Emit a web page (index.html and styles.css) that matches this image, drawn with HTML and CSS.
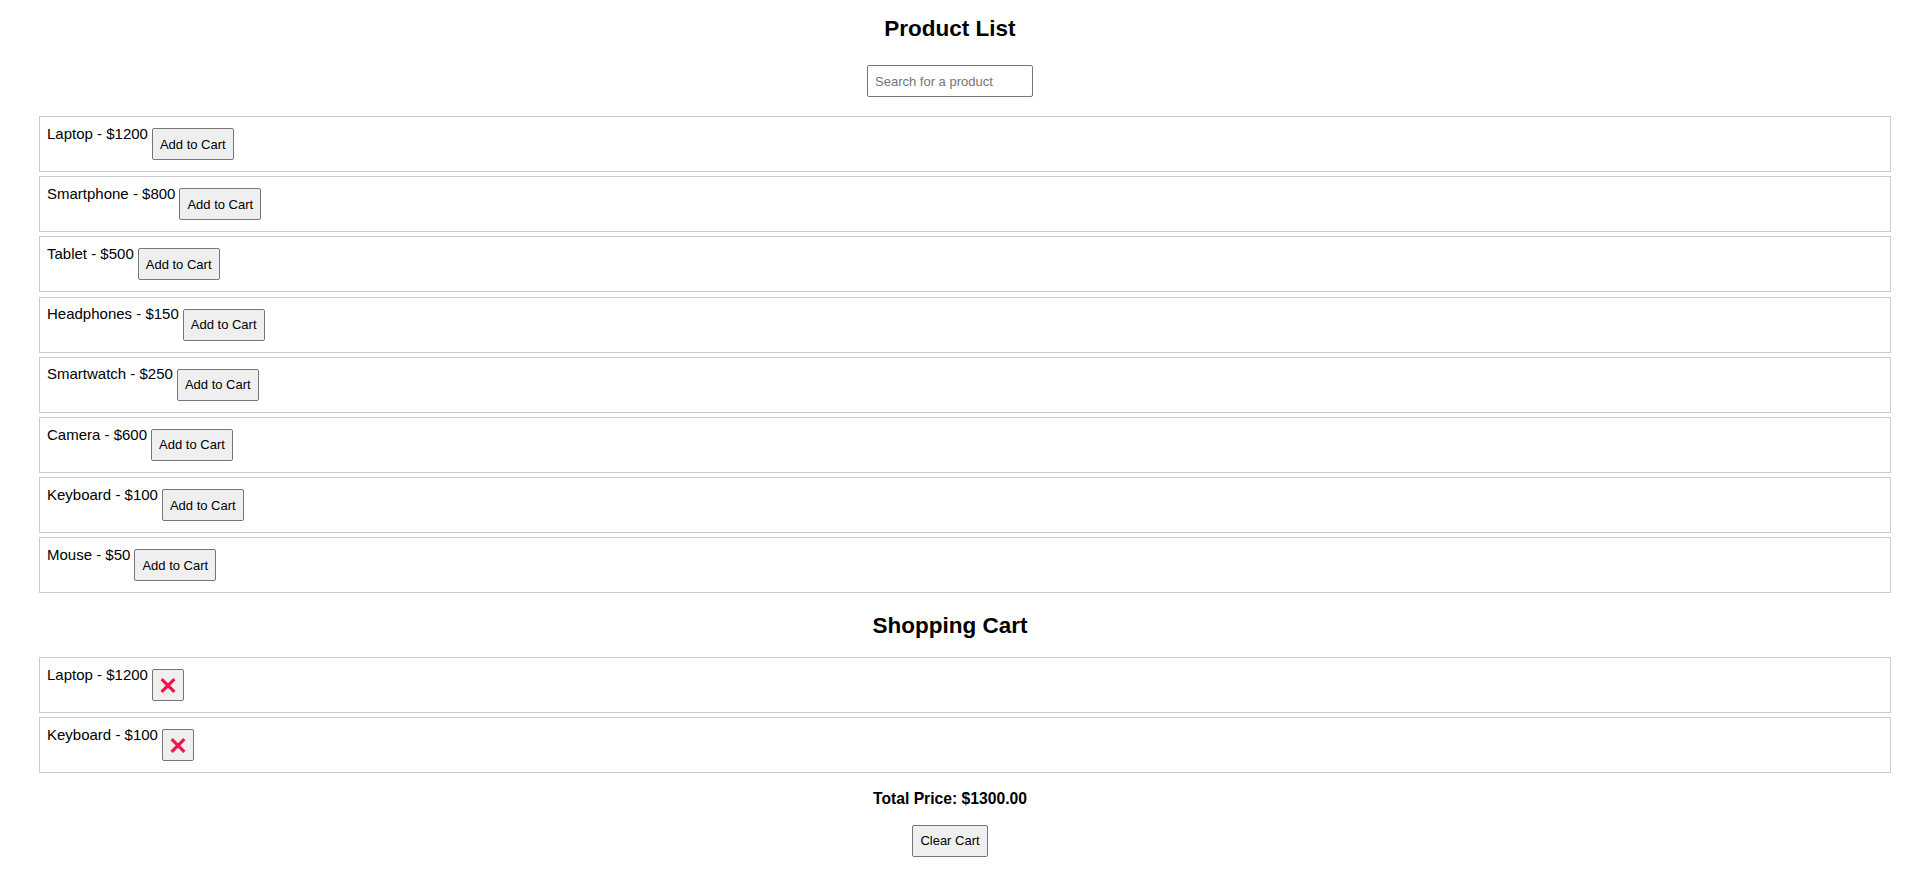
FILE: index.html
```html
<!DOCTYPE html>
<html lang="en">
<head>
<meta charset="utf-8">
<title>Product List</title>
<link rel="stylesheet" href="styles.css">
</head>
<body>
<main class="page">
  <h2 class="title">Product List</h2>
  <input class="search" type="text" placeholder="Search for a product">
  <ul class="list products">
    <li class="item"><span class="label">Laptop - $1200</span><button class="btn add">Add to Cart</button></li>
    <li class="item"><span class="label">Smartphone - $800</span><button class="btn add">Add to Cart</button></li>
    <li class="item"><span class="label">Tablet - $500</span><button class="btn add">Add to Cart</button></li>
    <li class="item"><span class="label">Headphones - $150</span><button class="btn add">Add to Cart</button></li>
    <li class="item"><span class="label">Smartwatch - $250</span><button class="btn add">Add to Cart</button></li>
    <li class="item"><span class="label">Camera - $600</span><button class="btn add">Add to Cart</button></li>
    <li class="item"><span class="label">Keyboard - $100</span><button class="btn add">Add to Cart</button></li>
    <li class="item"><span class="label">Mouse - $50</span><button class="btn add">Add to Cart</button></li>
  </ul>
  <h2 class="title cart-title">Shopping Cart</h2>
  <ul class="list cart">
    <li class="item"><span class="label">Laptop - $1200</span><button class="btn remove" aria-label="Remove"><svg width="16" height="15" viewBox="0 0 16 15"><path d="M1.6 1.2 L14.4 13.8 M14.4 1.2 L1.6 13.8" stroke="#f0164c" stroke-width="3.2" fill="none"/></svg></button></li>
    <li class="item"><span class="label">Keyboard - $100</span><button class="btn remove" aria-label="Remove"><svg width="16" height="15" viewBox="0 0 16 15"><path d="M1.6 1.2 L14.4 13.8 M14.4 1.2 L1.6 13.8" stroke="#f0164c" stroke-width="3.2" fill="none"/></svg></button></li>
  </ul>
  <p class="total">Total Price: $1300.00</p>
  <button class="btn clear">Clear Cart</button>
</main>
</body>
</html>
```

FILE: styles.css
```css
html, body {
  margin: 0;
  padding: 0;
  background: #ffffff;
}

body {
  font-family: "Liberation Sans", Arial, sans-serif;
  font-size: 15px;
  color: #000000;
}

.page {
  width: 1900px;
  display: flex;
  flex-direction: column;
  align-items: center;
  padding-bottom: 20px;
}

.title {
  margin: 16px 0 0 0;
  font-size: 22.5px;
  line-height: 26px;
  font-weight: bold;
}

.cart-title {
  margin-top: 19.3px;
}

.search {
  margin-top: 23px;
  box-sizing: border-box;
  width: 166px;
  height: 32px;
  padding: 0 7px;
  border: 1px solid #767676;
  border-radius: 2px;
  font-family: "Liberation Sans", Arial, sans-serif;
  font-size: 13px;
  color: #000;
  background: #fff;
}

.search::placeholder {
  color: #757575;
}

.list {
  list-style: none;
  align-self: stretch;
  margin: 19px 9px 0 39px;
  padding: 0;
  display: flex;
  flex-direction: column;
  gap: 4.2px;
}

.cart {
  margin-top: 18.6px;
}

.item {
  box-sizing: border-box;
  height: 56px;
  border: 1px solid #cccccc;
  padding: 0 7px;
  display: flex;
  align-items: flex-start;
}

.label {
  display: block;
  line-height: 17px;
  margin-top: 7.6px;
  white-space: nowrap;
}

.btn {
  box-sizing: border-box;
  height: 32px;
  padding: 0 7px;
  border: 1px solid #767676;
  border-radius: 2px;
  background: #efefef;
  color: #000;
  font-family: "Liberation Sans", Arial, sans-serif;
  font-size: 13px;
  line-height: 15px;
  cursor: pointer;
}

.add,
.remove {
  margin: 11px 0 0 4px;
}

.remove {
  width: 32px;
  padding: 0;
  display: flex;
  align-items: center;
  justify-content: center;
}

.remove svg {
  display: block;
}

.total {
  margin: 16.4px 0 0 0;
  font-size: 15.7px;
  line-height: 18px;
  font-weight: bold;
}

.clear {
  margin-top: 17px;
}
```
